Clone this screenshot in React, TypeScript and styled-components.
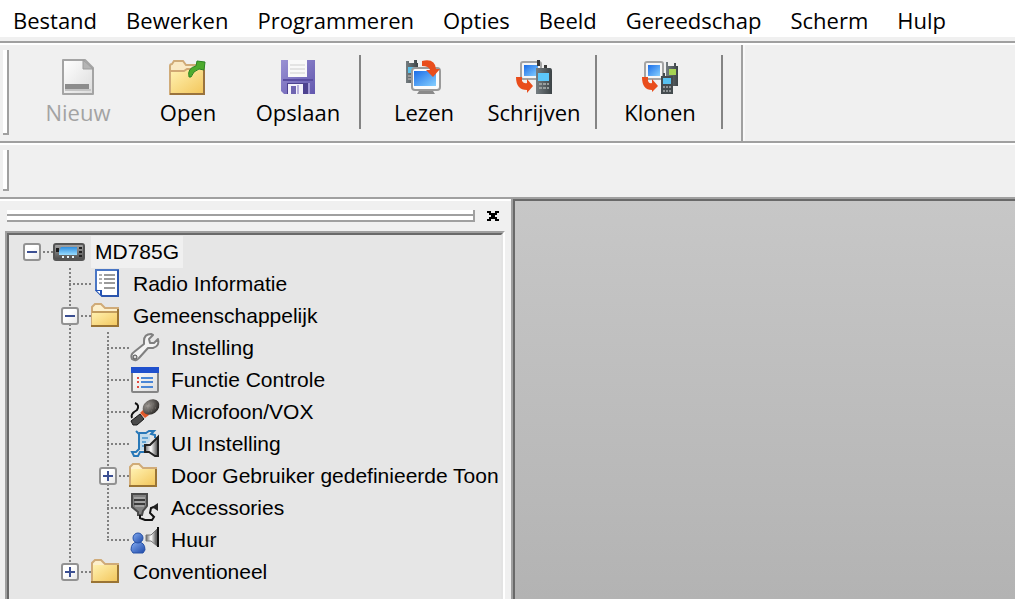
import React, { useState } from 'react';
import styled, { createGlobalStyle } from 'styled-components';

const GlobalStyle = createGlobalStyle`
  *, *::before, *::after { box-sizing: border-box; }
  body {
    margin: 0;
    background: #f0f0f0;
    color: #000;
    font-family: "Open Sans", "Noto Sans", sans-serif;
  }
  button { font: inherit; color: inherit; cursor: default; }
`;

const Window = styled.div`
  display: flex;
  flex-direction: column;
  height: 100vh;
  overflow: hidden;
`;

/* Menu bar */
const MenuBar = styled.nav`
  display: flex;
  gap: 29px;
  height: 37px;
  flex: none;
  padding: 0 13px;
  background: #fff;
`;

const MenuItem = styled.button`
  height: 37px;
  padding: 0;
  border: 0;
  background: none;
  font-size: 22px;
  line-height: 40px;
  white-space: nowrap;
`;

/* Tool bars */
const Rebar = styled.div`
  display: flex;
  flex: none;
  border-bottom: 2px solid #a0a0a0;
`;

const Band = styled.div<{ $height: number; $framed?: boolean }>`
  display: flex;
  align-items: stretch;
  height: ${(p) => p.$height}px;
  padding-left: 3px;
  flex: ${(p) => (p.$framed ? '0 0 auto' : '1 1 auto')};
  border-right: ${(p) => (p.$framed ? '2px solid #a0a0a0' : '0')};
`;

const BandRest = styled.div`
  flex: 1;
  border-left: 2px solid #f8f8f8;
`;

const RebarFrame = styled.div`
  flex: none;
  margin-top: 4px;
  border-top: 2px solid #a0a0a0;
`;

const Highlight = styled.div`
  height: 2px;
  background: #fff;
`;

const Gripper = styled.div`
  width: 6px;
  flex: none;
  margin: 5px 14px 6px 0;
  background: #fff;
  border-right: 2px solid #a0a0a0;
  border-bottom: 2px solid #a0a0a0;
`;

const ToolButton = styled.button`
  display: flex;
  flex-direction: column;
  align-items: center;
  width: 110px;
  padding: 13px 0 0;
  border: 0;
  background: none;
  font-size: 22px;
  line-height: 32px;
  &:disabled { color: #a3a3a3; }
  svg { display: block; flex: none; }
`;

const Separator = styled.div`
  width: 2px;
  flex: none;
  margin: 10px 8px 12px 6px;
  background: #848484;
  &:last-child { margin-right: 18px; }
`;

/* Work area */
const Body = styled.div`
  display: flex;
  flex: 1;
  min-height: 0;
`;

const Dock = styled.aside`
  display: flex;
  flex-direction: column;
  flex: 0 0 511px;
  min-width: 0;
  padding: 0 6px 0 5px;
  border-top: 2px solid #fff;
`;

const DockHeader = styled.div`
  display: flex;
  align-items: center;
  height: 30px;
  flex: none;
  padding: 0 4px 0 2px;
`;

const DockGrip = styled.div`
  flex: 1;
  height: 12px;
  margin-right: 10px;
  border-right: 2px solid #a0a0a0;
  background: linear-gradient(
    #fff 0 4px, #a0a0a0 4px 6px, #fff 6px 10px, #a0a0a0 10px 12px
  );
`;

const CloseButton = styled.button`
  display: flex;
  padding: 0;
  border: 0;
  background: none;
`;

const TreeFrame = styled.div`
  flex: 1;
  min-height: 0;
  border: 2px solid #a0a0a0;
  border-right-color: #fff;
  border-bottom: 0;
`;

const TreeView = styled.div`
  height: 100%;
  overflow: hidden;
  padding: 1px 0 0 4px;
  border: 2px solid #696969;
  border-right-color: #e3e3e3;
  border-bottom: 0;
  background: #e6e6e6;
  font-family: "Liberation Sans", Arial, sans-serif;
  font-size: 21px;
`;

const Branch = styled.ul<{ $root?: boolean }>`
  list-style: none;
  margin: 0;
  padding: 0 0 0 ${(p) => (p.$root ? 0 : 38)}px;
`;

const Node = styled.li<{ $guide: 'none' | 'full' | 'half' }>`
  background: repeating-linear-gradient(#808080 0 2px, transparent 2px 4px) no-repeat 18px 0;
  background-size: 2px ${(p) => ({ none: '0', full: '100%', half: '16px' })[p.$guide]};
`;

const Row = styled.div<{ $root?: boolean }>`
  display: flex;
  align-items: center;
  height: 32px;
  white-space: nowrap;
  background: repeating-linear-gradient(90deg, #808080 0 2px, transparent 2px 4px) no-repeat
    ${(p) => (p.$root ? 30 : 18)}px 15px / ${(p) => (p.$root ? 10 : 22)}px 2px;
  svg { display: block; flex: none; }
`;

const ExpanderCell = styled.div`
  display: flex;
  justify-content: center;
  width: 38px;
  flex: none;
`;

const Expander = styled.button`
  width: 18px;
  height: 18px;
  padding: 0;
  border: 2px solid #929292;
  border-radius: 3px;
  background: linear-gradient(135deg, #fff 40%, #e8e8e8);
`;

const NodeLabel = styled.span<{ $selected?: boolean }>`
  padding: 0 4px;
  line-height: 32px;
  background: ${(p) => (p.$selected ? '#f0f0f0' : 'none')};
`;

const Workspace = styled.main`
  flex: 1;
  min-width: 0;
  margin-top: -2px;
  border-top: 2px solid #a0a0a0;
  border-left: 2px solid #a0a0a0;
`;

const Canvas = styled.div`
  height: 100%;
  border-top: 2px solid #696969;
  border-left: 2px solid #696969;
  background: linear-gradient(#c7c7c7, #b3b3b3);
`;

/* Shared gradients for the drawings */
const DefsSvg = styled.svg`
  position: absolute;
`;

const Defs = () => (
  <DefsSvg width="0" height="0" aria-hidden="true">
    <defs>
      <linearGradient id="folder" x1="0" y1="0" x2="1" y2="1">
        <stop offset="0" stopColor="#fff1b0" />
        <stop offset="1" stopColor="#f3c75d" />
      </linearGradient>
      <linearGradient id="screen" x1="0" y1="0" x2="1" y2="1">
        <stop offset="0" stopColor="#1b6de8" />
        <stop offset="1" stopColor="#86d0ff" />
      </linearGradient>
      <linearGradient id="paper" x1="0" y1="0" x2="1" y2="1">
        <stop offset="0" stopColor="#ffffff" />
        <stop offset="1" stopColor="#dcdcdc" />
      </linearGradient>
      <linearGradient id="metal" x1="0" y1="0" x2="0" y2="1">
        <stop offset="0" stopColor="#a8a8a8" />
        <stop offset="1" stopColor="#4a4a4a" />
      </linearGradient>
      <linearGradient id="lcd" x1="0" y1="0" x2="0" y2="1">
        <stop offset="0" stopColor="#2f8fdf" />
        <stop offset="1" stopColor="#9adcff" />
      </linearGradient>
      <linearGradient id="handset" x1="0" y1="0" x2="1" y2="0">
        <stop offset="0" stopColor="#757d81" />
        <stop offset="1" stopColor="#3c4346" />
      </linearGradient>
      <linearGradient id="violet" x1="0" y1="0" x2="1" y2="1">
        <stop offset="0" stopColor="#9a92d4" />
        <stop offset="1" stopColor="#6257ae" />
      </linearGradient>
      <linearGradient id="person" x1="0" y1="0" x2="1" y2="1">
        <stop offset="0" stopColor="#86adf2" />
        <stop offset="1" stopColor="#1c48a8" />
      </linearGradient>
      <linearGradient id="horn" x1="0" y1="0" x2="1" y2="0">
        <stop offset="0" stopColor="#666" />
        <stop offset=".45" stopColor="#fff" />
        <stop offset="1" stopColor="#444" />
      </linearGradient>
      <radialGradient id="mesh" cx=".4" cy=".3" r=".7">
        <stop offset="0" stopColor="#a19c97" />
        <stop offset="1" stopColor="#2b2826" />
      </radialGradient>
    </defs>
  </DefsSvg>
);

const ToolSvg = ({ children }: { children: React.ReactNode }) => (
  <svg width="38" height="38" viewBox="0 0 38 38" aria-hidden="true">{children}</svg>
);

const NewIcon = () => (
  <ToolSvg>
    <path d="M4 2H26L34 10V36H4Z" fill="url(#paper)" stroke="#a4a4a4" strokeWidth="2" strokeLinejoin="round" />
    <path d="M24 2V11H34Z" fill="#b4b4b4" stroke="#9c9c9c" />
    <path d="M6 26H30V31H6Z" fill="#8c8c8c" />
    <path d="M6 32H32" stroke="#c4c4c4" strokeWidth="2" />
  </ToolSvg>
);

const OpenIcon = () => (
  <ToolSvg>
    <path d="M1 36V8Q1 6 3 6L5 3H14L17 7H33Q35 7 35 9V36Z" fill="#fae9c4" stroke="#d0ab78" strokeWidth="2" />
    <path d="M2 14H15L17 12H34V35H2Z" fill="url(#folder)" />
    <path d="M1 13H15L18 11H24" fill="none" stroke="#d0a873" strokeWidth="2" />
    <path d="M1 36H35V12" fill="none" stroke="#9a733d" strokeWidth="2" />
    <path d="M20 19Q18 10 27 8L28 3L36 4L35 12L30 11Q24 13 22 19Z" fill="#4dab2d" stroke="#2c8423" />
  </ToolSvg>
);

const SaveIcon = () => (
  <ToolSvg>
    <path d="M2 2H36V36H5L2 33Z" fill="url(#violet)" />
    <path d="M9 2H28V19H9Z" fill="#f9f9f9" />
    <path d="M11 7H26M11 11H26M11 15H26" stroke="#cfcfcf" strokeWidth="1" />
    <path d="M4 22H34" stroke="#5a4ea2" strokeWidth="2" />
    <path d="M8 25H29V36H8Z" fill="#4d4290" />
    <path d="M9 26H24V36H9Z" fill="#f4f2fb" />
    <path d="M12 28H17V36H12Z" fill="#6f65b1" />
    <path d="M19 27V36" stroke="#b8b1dc" strokeWidth="2" />
    <path d="M30 25V36" stroke="#a49cd8" strokeWidth="2" />
  </ToolSvg>
);

const ReadIcon = () => (
  <ToolSvg>
    <path d="M1 3H4V5H9V2H12V5H13V25H1Z" fill="url(#handset)" />
    <path d="M3 9H11V15H3Z" fill="#59bfe8" />
    <path d="M3 18H7M3 21H7" stroke="#999" strokeWidth="2" />
    <rect x="7" y="10" width="28" height="22" rx="3" fill="#fbfbfb" stroke="#9a9a9a" strokeWidth="2" />
    <rect x="9" y="13" width="22" height="15" fill="url(#screen)" />
    <path d="M14 33H28L30 36H12Z" fill="#8a8a8a" />
    <path d="M17 3Q30 0 31 11H35L28 19L21 12H25Q24 8 17 8Z" fill="#e94d1c" />
  </ToolSvg>
);

const WriteIcon = () => (
  <ToolSvg>
    <rect x="6" y="4" width="20" height="17" rx="2" fill="#f6f6f6" stroke="#a4a4a4" strokeWidth="2" />
    <rect x="9" y="7" width="14" height="11" fill="url(#screen)" />
    <path d="M22 2H25V8H22ZM29 7H32V11H29Z" fill="#3a3a3a" />
    <path d="M21 10H35Q37 10 37 13V36H21Z" fill="url(#handset)" />
    <rect x="23" y="15" width="11" height="8" fill="#5cc7fa" />
    <path d="M24 26H34M24 30H34" stroke="#989e9e" strokeWidth="2" strokeDasharray="3 1" />
    <path d="M1 19H7V23Q9 26 12 25V21L18 28L12 35V32Q1 32 1 19Z" fill="#e94d1c" />
  </ToolSvg>
);

const CloneIcon = () => (
  <ToolSvg>
    <rect x="4" y="4" width="18" height="17" rx="2" fill="#f6f6f6" stroke="#a4a4a4" strokeWidth="2" />
    <rect x="7" y="7" width="12" height="11" fill="url(#screen)" />
    <path d="M25 4H27V8H33V5H35V8H37V28H25Z" fill="url(#handset)" />
    <path d="M28 11H35V17H28Z" fill="#a6d453" />
    <path d="M20 18H22V15H24V18H32V36H20Z" fill="#444b4e" />
    <rect x="22" y="20" width="8" height="6" fill="#57c0ef" />
    <path d="M22 29H30M22 33H30" stroke="#8d9294" strokeWidth="2" strokeDasharray="2 1" />
    <path d="M1 19H7V23Q8 26 11 25V21L17 28L11 34V32Q1 32 1 19Z" fill="#e94d1c" />
  </ToolSvg>
);

const NodeSvg = ({ children }: { children: React.ReactNode }) => (
  <svg width="40" height="32" viewBox="0 0 40 32" aria-hidden="true">{children}</svg>
);

const RadioIcon = () => (
  <NodeSvg>
    <rect x="3" y="8" width="30" height="16" rx="2" fill="url(#metal)" stroke="#555" strokeWidth="2" />
    <path d="M10 11H26V19H8V15Z" fill="url(#lcd)" />
    <path d="M11 21H26" stroke="#e8f4fa" strokeWidth="2" strokeDasharray="2 3" />
    <path d="M5 12H8V16H5Z" fill="#1c1c1c" />
    <path d="M28 12H31M28 16H31M28 20H31" stroke="#222" strokeWidth="2" />
  </NodeSvg>
);

const DocIcon = () => (
  <NodeSvg>
    <path d="M7 2H29V28H13L7 22Z" fill="#fff" stroke="#4a76c4" strokeWidth="2" />
    <path d="M29 2V28H13" fill="none" stroke="#2b55ad" strokeWidth="2" />
    <path d="M6 22H13V29Z" fill="#2352b5" />
    <path d="M8 23H11V26Z" fill="#fff" />
    <path d="M10 7H13M10 11H13M10 15H13" stroke="#b0b0b0" strokeWidth="2" />
    <path d="M15 7H26M15 11H26M15 15H26M15 20H26" stroke="#9a9a9a" strokeWidth="2" />
  </NodeSvg>
);

const FolderIcon = ({ open }: { open?: boolean }) => (
  <NodeSvg>
    <path d="M3 26V7L6 4H12L16 8H29V26Z" fill="#fdf0cc" stroke="#d0ab78" strokeWidth="2" />
    {open ? (
      <>
        <path d="M3 12H29V26H3Z" fill="url(#folder)" />
        <path d="M3 12H29" stroke="#c39d5e" strokeWidth="2" />
      </>
    ) : (
      <path d="M4 9H28V25H4Z" fill="url(#folder)" />
    )}
    <path d="M2 26H29V9" fill="none" stroke="#9a7434" strokeWidth="2" />
  </NodeSvg>
);

const WrenchIcon = () => (
  <NodeSvg>
    <path
      d="M17 9Q17 2 24 2L26 3L22 7L23 11L27 11L31 7Q33 14 26 16L21 16L12 26Q9 30 5 27Q3 23 7 20L17 12Z"
      fill="#f4f4f4" stroke="#808080" strokeWidth="2" strokeLinejoin="round"
    />
    <circle cx="8" cy="25" r="2" fill="#ddd" stroke="#444" />
  </NodeSvg>
);

const ListIcon = () => (
  <NodeSvg>
    <rect x="5" y="4" width="26" height="24" rx="1" fill="url(#paper)" stroke="#858585" strokeWidth="2" />
    <rect x="4" y="3" width="28" height="6" fill="#1f50cd" />
    <path d="M10 14H12M10 18H12M10 23H12" stroke="#e14b42" strokeWidth="2" />
    <path d="M14 14H26M14 18H26M14 23H26" stroke="#4a86d6" strokeWidth="2" />
  </NodeSvg>
);

const MicIcon = () => (
  <NodeSvg>
    <path d="M8 7Q13 9 10 14Q3 18 5 22" fill="none" stroke="#111" strokeWidth="2" />
    <path d="M13 18L17 23L10 29H6L4 25Z" fill="#4a4a4a" stroke="#161616" />
    <path d="M13 17L17 13L22 19L18 22Z" fill="#e0582a" />
    <ellipse cx="24" cy="11" rx="9" ry="7" fill="url(#mesh)" transform="rotate(-35 24 11)" />
    <path d="M20 8H28M19 12H29M21 15H27" stroke="#77726d" strokeWidth="1" strokeDasharray="1 2" />
  </NodeSvg>
);

const SoundSettingIcon = () => (
  <NodeSvg>
    <path d="M12 5H19L22 3H27L24 6L28 7V10M12 5V21L9 24H5L7 28H11L13 24H17" fill="none" stroke="#2878b8" strokeWidth="2" />
    <path d="M12 6L9 3M15 10H21M15 14H19M15 18H18" stroke="#2878b8" strokeWidth="2" />
    <path d="M13 6H23V13L18 17V22H13Z" fill="#9cd0f0" opacity=".5" />
    <path d="M18 17H23L31 9V28H28L22 24H18Z" fill="url(#horn)" stroke="#222" strokeWidth="2" />
  </NodeSvg>
);

const AccessoryIcon = () => (
  <NodeSvg>
    <path d="M5 2H20V14L16 19L15 23H11V20L5 15Z" fill="#808080" stroke="#4a4a4a" strokeWidth="2" />
    <path d="M7 6H18M8 10H18M8 14H17" stroke="#c4c4c4" strokeWidth="1" />
    <path d="M7 8H18M7 12H18" stroke="#3b3b3b" strokeWidth="2" />
    <path d="M13 23V26L18 28H25L27 25L23 21L24 16L27 15" fill="none" stroke="#111" strokeWidth="2" />
    <path d="M25 15L31 11V19Z" fill="#222" />
  </NodeSvg>
);

const RentalIcon = () => (
  <NodeSvg>
    <path d="M4 26Q4 18 11 18Q18 18 18 26L16 29H6Z" fill="url(#person)" stroke="#2852a6" />
    <circle cx="11" cy="14" r="5" fill="url(#person)" stroke="#2852a6" />
    <path d="M19 11H24L30 5V22L24 17H19Z" fill="url(#horn)" stroke="#777" />
    <path d="M31 3V23" stroke="#111" strokeWidth="2" />
  </NodeSvg>
);

type TreeItem = {
  label: string;
  icon: (open: boolean) => React.ReactNode;
  open?: boolean;
  children?: TreeItem[];
};

const tree: TreeItem = {
  label: 'MD785G',
  icon: () => <RadioIcon />,
  open: true,
  children: [
    { label: 'Radio Informatie', icon: () => <DocIcon /> },
    {
      label: 'Gemeenschappelijk',
      icon: (open) => <FolderIcon open={open} />,
      open: true,
      children: [
        { label: 'Instelling', icon: () => <WrenchIcon /> },
        { label: 'Functie Controle', icon: () => <ListIcon /> },
        { label: 'Microfoon/VOX', icon: () => <MicIcon /> },
        { label: 'UI Instelling', icon: () => <SoundSettingIcon /> },
        { label: 'Door Gebruiker gedefinieerde Toon', icon: (open) => <FolderIcon open={open} />, children: [] },
        { label: 'Accessories', icon: () => <AccessoryIcon /> },
        { label: 'Huur', icon: () => <RentalIcon /> },
      ],
    },
    { label: 'Conventioneel', icon: (open) => <FolderIcon open={open} />, children: [] },
  ],
};

const TreeNode = ({ item, root, last }: { item: TreeItem; root?: boolean; last?: boolean }) => {
  const [open, setOpen] = useState(Boolean(item.open));
  const children = item.children;
  return (
    <Node $guide={root ? 'none' : last ? 'half' : 'full'}>
      <Row $root={root}>
        <ExpanderCell>
          {children && (
            <Expander aria-label={item.label} aria-expanded={open} onClick={() => setOpen(!open)}>
              <svg width="14" height="14" viewBox="0 0 14 14" aria-hidden="true">
                <path d={open ? 'M2 7H12' : 'M2 7H12M7 2V12'} stroke="#3b4f92" strokeWidth="2" />
              </svg>
            </Expander>
          )}
        </ExpanderCell>
        {item.icon(open)}
        <NodeLabel $selected={root}>{item.label}</NodeLabel>
      </Row>
      {open && children && (
        <Branch>
          {children.map((child, i) => (
            <TreeNode key={child.label} item={child} last={i === children.length - 1} />
          ))}
        </Branch>
      )}
    </Node>
  );
};

const menus = ['Bestand', 'Bewerken', 'Programmeren', 'Opties', 'Beeld', 'Gereedschap', 'Scherm', 'Hulp'];

export default function App() {
  return (
    <Window>
      <GlobalStyle />
      <Defs />
      <MenuBar>
        {menus.map((m) => <MenuItem key={m}>{m}</MenuItem>)}
      </MenuBar>
      <RebarFrame>
        <Highlight />
        <Rebar>
          <Band $height={96} $framed>
            <Gripper />
            <ToolButton disabled><NewIcon />Nieuw</ToolButton>
            <ToolButton><OpenIcon />Open</ToolButton>
            <ToolButton><SaveIcon />Opslaan</ToolButton>
            <Separator />
            <ToolButton><ReadIcon />Lezen</ToolButton>
            <ToolButton><WriteIcon />Schrijven</ToolButton>
            <Separator />
            <ToolButton><CloneIcon />Klonen</ToolButton>
            <Separator />
          </Band>
          <BandRest />
        </Rebar>
        <Highlight />
        <Rebar>
          <Band $height={52}>
            <Gripper />
          </Band>
        </Rebar>
      </RebarFrame>
      <Body>
        <Dock>
          <DockHeader>
            <DockGrip />
            <CloseButton aria-label="Sluiten">
              <svg width="16" height="12" viewBox="0 0 16 12" aria-hidden="true">
                <path d="M2 1H6V3H10V1H14V3H12V5H10V7H12V9H14V11H10V9H6V11H2V9H4V7H6V5H4V3H2Z" fill="#000" />
              </svg>
            </CloseButton>
          </DockHeader>
          <TreeFrame>
            <TreeView>
              <Branch $root>
                <TreeNode item={tree} root />
              </Branch>
            </TreeView>
          </TreeFrame>
        </Dock>
        <Workspace>
          <Canvas />
        </Workspace>
      </Body>
    </Window>
  );
}
